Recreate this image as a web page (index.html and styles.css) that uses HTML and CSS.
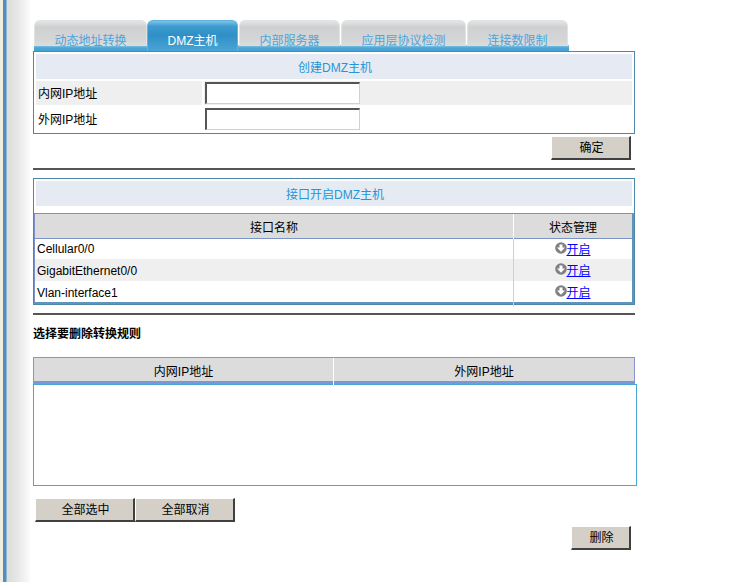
FILE: index.html
```html
<!DOCTYPE html>
<html lang="zh-CN">
<head>
<meta charset="utf-8">
<title>DMZ主机</title>
<link rel="stylesheet" href="styles.css">
</head>
<body>
<div class="sidebar"></div>
<main class="main">
  <nav class="tabs">
    <a class="tab tab-a">动态地址转换</a>
    <a class="tab tab-active">DMZ主机</a>
    <a class="tab tab-c">内部服务器</a>
    <a class="tab tab-d">应用层协议检测</a>
    <a class="tab tab-e">连接数限制</a>
  </nav>
  <section class="box box-create">
    <h2 class="box-title">创建DMZ主机</h2>
    <div class="form-row form-row-shaded">
      <label class="form-label">内网IP地址</label>
      <div class="form-field"><input class="text-input" type="text"></div>
    </div>
    <div class="form-row">
      <label class="form-label">外网IP地址</label>
      <div class="form-field"><input class="text-input" type="text"></div>
    </div>
  </section>
  <div class="actions actions-confirm"><button class="btn btn-small">确定</button></div>
  <div class="rule rule-one"></div>
  <section class="box box-iface">
    <h2 class="box-title">接口开启DMZ主机</h2>
    <div class="iface-table">
      <div class="iface-row iface-head">
        <div class="cell-name">接口名称</div>
        <div class="cell-state">状态管理</div>
      </div>
      <div class="iface-row iface-r1">
        <div class="cell-name">Cellular0/0</div>
        <div class="cell-state"><svg class="icon" viewBox="0 0 12 12"><circle cx="6" cy="6" r="5.8" fill="#808080"/><path d="M4.5 2.5h3v3H10L6 9.8 2 5.5h2.5z" fill="#fff"/></svg><a class="link" href="#">开启</a></div>
      </div>
      <div class="iface-row iface-r2 iface-shaded">
        <div class="cell-name">GigabitEthernet0/0</div>
        <div class="cell-state"><svg class="icon" viewBox="0 0 12 12"><circle cx="6" cy="6" r="5.8" fill="#808080"/><path d="M4.5 2.5h3v3H10L6 9.8 2 5.5h2.5z" fill="#fff"/></svg><a class="link" href="#">开启</a></div>
      </div>
      <div class="iface-row iface-r3">
        <div class="cell-name">Vlan-interface1</div>
        <div class="cell-state"><svg class="icon" viewBox="0 0 12 12"><circle cx="6" cy="6" r="5.8" fill="#808080"/><path d="M4.5 2.5h3v3H10L6 9.8 2 5.5h2.5z" fill="#fff"/></svg><a class="link" href="#">开启</a></div>
      </div>
    </div>
  </section>
  <div class="rule rule-two"></div>
  <h3 class="section-title">选择要删除转换规则</h3>
  <div class="rule-head">
    <div class="rule-col rule-col-a">内网IP地址</div>
    <div class="rule-col">外网IP地址</div>
  </div>
  <div class="rule-list"></div>
  <div class="select-buttons">
    <button class="btn btn-wide">全部选中</button>
    <button class="btn btn-wide">全部取消</button>
  </div>
  <div class="actions actions-delete"><button class="btn btn-small">删除</button></div>
</main>
</body>
</html>
```
FILE: styles.css
```css
* { box-sizing: border-box; }
html, body { margin: 0; height: 100%; overflow: hidden; }
body {
  display: flex;
  background: #fff;
  color: #000;
  font: 12px/1.2 "Liberation Sans", "Noto Sans CJK SC", sans-serif;
}
.sidebar {
  flex: 0 0 30px;
  height: 582px;
  border-left: 3px solid #f1eee0;
  background: linear-gradient(90deg, #4f8fc2 0, #4f8fc2 3px, #dcdcdc 4px, #e6e6e6 14px, #fbfbfb 27px, #fff 30px);
}
.main { width: 607px; padding-left: 3px; }

.tabs {
  display: flex;
  height: 31px;
  margin: 20px 0 0 1px;
  width: 535px;
  background: linear-gradient(#fff 0, #fff 25px, #8fcbe8 25px, #4aa6d6 28px, #4a9fd0 31px);
}
.tab {
  display: block;
  height: 26px;
  margin-right: 1px;
  padding-top: 15px;
  border: 1px solid #e2e2e2;
  border-bottom: 0;
  border-radius: 6px 6px 0 0;
  background: linear-gradient(#e4e4e4 0, #cfd0d1 6px, #d4d5d6 18px, #dedede 26px);
  color: #4ba5dc;
  font-size: 12px;
  line-height: 11px;
  text-align: center;
}
.tab-a { width: 113px; margin-right: 0; }
.tab-active {
  width: 91px;
  height: 31px;
  padding-top: 13px;
  border: 1px solid #62b4de;
  border-bottom: 0;
  background: linear-gradient(#7fc3e6 0, #3f9dd0 5px, #2f8fc6 14px, #4ba6d6 31px);
  color: #fff;
  font-size: 12px;
  line-height: 14px;
}
.tab-c { width: 101px; }
.tab-d { width: 125px; }
.tab-e { width: 101px; margin-right: 0; }

.box { width: 602px; border: 1px solid #4f87a8; background: #fff; }
.box-create { height: 83px; padding: 2px; }
.box-title {
  height: 25px;
  margin: 0;
  padding-left: 2px;
  background: #e6eaf2;
  color: #2496d8;
  font-size: 12px;
  font-weight: normal;
  line-height: 28px;
  text-align: center;
}
.form-row {
  display: flex;
  height: 24px;
  margin-top: 2px;
  font-size: 12px;
}
.form-label {
  flex: 0 0 166px;
  padding-left: 2px;
  line-height: 26px;
}
.form-field { flex: 1; margin-left: 2px; padding: 1px 0 0 1px; }
.form-row-shaded .form-label, .form-row-shaded .form-field { background: #eeefee; }
.text-input {
  display: block;
  width: 155px;
  height: 22px;
  padding: 0;
  border-style: solid;
  border-width: 2px 1px 1px 2px;
  border-color: #555 #d4d0c8 #d4d0c8 #555;
  background: #fff;
}

.actions { display: flex; justify-content: flex-end; width: 598px; }
.actions-confirm { margin-top: 2px; }
.actions-delete { margin-top: 4px; }
.btn {
  height: 24px;
  padding: 0 0 2px 2px;
  border-style: solid;
  border-width: 1px 2px 2px 1px;
  border-color: #fff #404040 #404040 #fff;
  background: #d4d0c8;
  color: #000;
  font: 12px "Liberation Sans", "Noto Sans CJK SC", sans-serif;
}
.btn-small { width: 80px; }
.actions-delete .btn-small { width: 60px; }
.btn-wide { width: 100px; }

.rule { width: 602px; height: 2px; background: #555; }
.rule-one { margin: 8px 0; }
.rule-two { margin-top: 8px; }

.box-iface { height: 127px; padding: 2px 0 0; }
.box-iface .box-title { margin: 0 2px; }
.iface-table {
  margin-top: 7px;
  height: 91px;
  border-style: solid;
  border-width: 1px 2px 2px 1px;
  border-color: #7b93c8 #5f94bc #5f94bc #7b93c8;
}
.iface-row { display: grid; grid-template-columns: 478px 1fr; }
.cell-name { padding-left: 2px; }
.cell-state { border-left: 1px solid #d0d0d0; text-align: center; }
.iface-head {
  height: 25px;
  border-bottom: 1px solid #7b93c8;
  background: #dcdcdc;
  line-height: 28px;
}
.iface-head .cell-name { padding: 0; text-align: center; }
.iface-head .cell-state { border-left: 1px solid #fff; }
.iface-r1 { height: 20px; line-height: 21px; }
.iface-r2 { height: 22px; line-height: 24px; }
.iface-r3 { height: 22px; line-height: 24px; }
.iface-r1 .cell-state { line-height: 23px; }
.iface-r2 .cell-state, .iface-r3 .cell-state { line-height: 25px; }
.iface-shaded { background: #eeefee; }
.icon { width: 12px; height: 12px; margin-right: -1px; vertical-align: 0; }
.link { color: #00f; text-decoration: underline; }

.section-title {
  height: 14px;
  margin: 12px 0 0;
  font-size: 12px;
  font-weight: bold;
  line-height: 14px;
}
.rule-head {
  display: grid;
  grid-template-columns: 300px 1fr;
  width: 602px;
  height: 27px;
  margin-top: 16px;
  border: 1px solid #8a93cf;
  border-bottom-width: 3px;
  border-bottom-color: #7b97d6;
  background: #dcdcdc;
  line-height: 28px;
  text-align: center;
}
.rule-col-a { border-right: 1px solid #fff; }
.rule-list {
  width: 604px;
  height: 102px;
  border: 1px solid #4ba6d8;
  background: #fff;
}
.select-buttons { display: flex; margin: 12px 0 0 2px; }
```
